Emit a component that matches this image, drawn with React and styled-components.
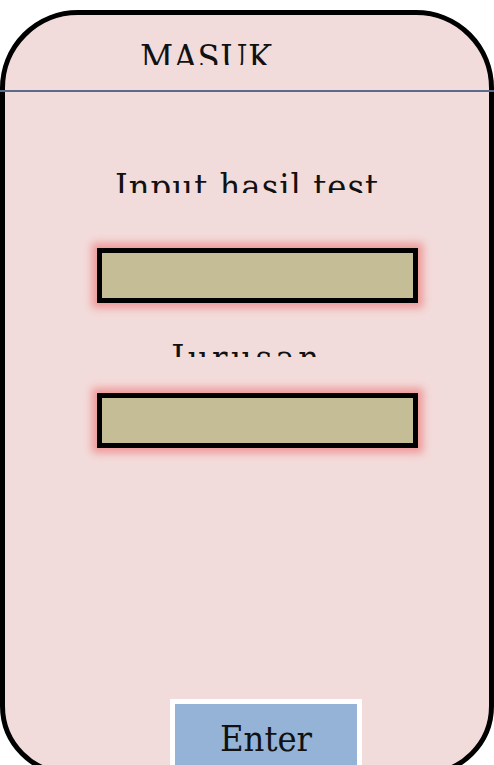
import styled, { createGlobalStyle } from 'styled-components';

const GlobalStyle = createGlobalStyle`
  html,
  body {
    margin: 0;
    padding: 0;
    overflow: hidden;
    background: #ffffff;
  }
`;

const serif = `"DejaVu Serif Condensed", "DejaVu Serif", "Liberation Serif", serif`;

const Phone = styled.div`
  box-sizing: border-box;
  display: flex;
  flex-direction: column;
  width: 494px;
  height: 766px;
  margin-top: 10px;
  border: 5px solid #000000;
  border-radius: 78px 78px 70px 70px;
  background-color: #f2dcdb;
`;

const Header = styled.header`
  flex-shrink: 0;
  height: 75px;
  padding: 25px 0 0 135px;
  box-sizing: border-box;
`;

// teks dipotong bagian bawahnya, seperti kotak teks yang terlalu pendek
const Label = styled.div`
  flex-shrink: 0;
  height: ${(props) => props.$clip}px;
  overflow: hidden;
  font-family: ${serif};
  font-stretch: condensed;
  font-size: 36px;
  line-height: 36px;
  color: #111111;
  letter-spacing: ${(props) => props.$spacing}px;
  text-align: ${(props) => (props.$left ? 'left' : 'center')};
  white-space: nowrap;
`;

const Divider = styled.hr`
  flex-shrink: 0;
  height: 2px;
  margin: 0 -5px;
  border: none;
  background-color: #5b6b8c;
`;

const Body = styled.main`
  display: flex;
  flex-direction: column;
  flex: 1;
  min-height: 0;
  padding-top: 77px;
`;

const Field = styled.div`
  flex-shrink: 0;
  box-sizing: border-box;
  width: 321px;
  height: 55px;
  margin: ${(props) => props.$top}px 0 0 92px;
  border: 5px solid #000000;
  background-color: #c4bd96;
  box-shadow: 0 0 8px 5px rgba(238, 130, 130, 0.75);
`;

const Spacer = styled.div`
  flex-shrink: 0;
  height: ${(props) => props.$size}px;
`;

const EnterButton = styled.button`
  flex-shrink: 0;
  box-sizing: border-box;
  display: flex;
  justify-content: center;
  align-items: flex-start;
  align-self: flex-start;
  width: 192px;
  height: 72px;
  margin: 251px 0 0 165px;
  padding: 17px 0 0;
  border: 5px solid #ffffff;
  border-bottom: none;
  background-color: #95b3d7;
  font-family: ${serif};
  font-stretch: condensed;
  font-size: 36px;
  line-height: 36px;
  color: #111111;
`;

const App = () => {
  return (
    <>
      <GlobalStyle />
      <Phone>
        <Header>
          <Label $left $clip={25} $spacing={0.5}>
            MASUK
          </Label>
        </Header>
        <Divider />
        <Body>
          <Label $clip={24} $spacing={1}>
            Input hasil test
          </Label>
          <Field $top={55} />
          <Spacer $size={37} />
          <Label $clip={17} $spacing={3.5}>
            Jurusan
          </Label>
          <Field $top={36} />
          <EnterButton type='button'>Enter</EnterButton>
        </Body>
      </Phone>
    </>
  );
};

export default App;
